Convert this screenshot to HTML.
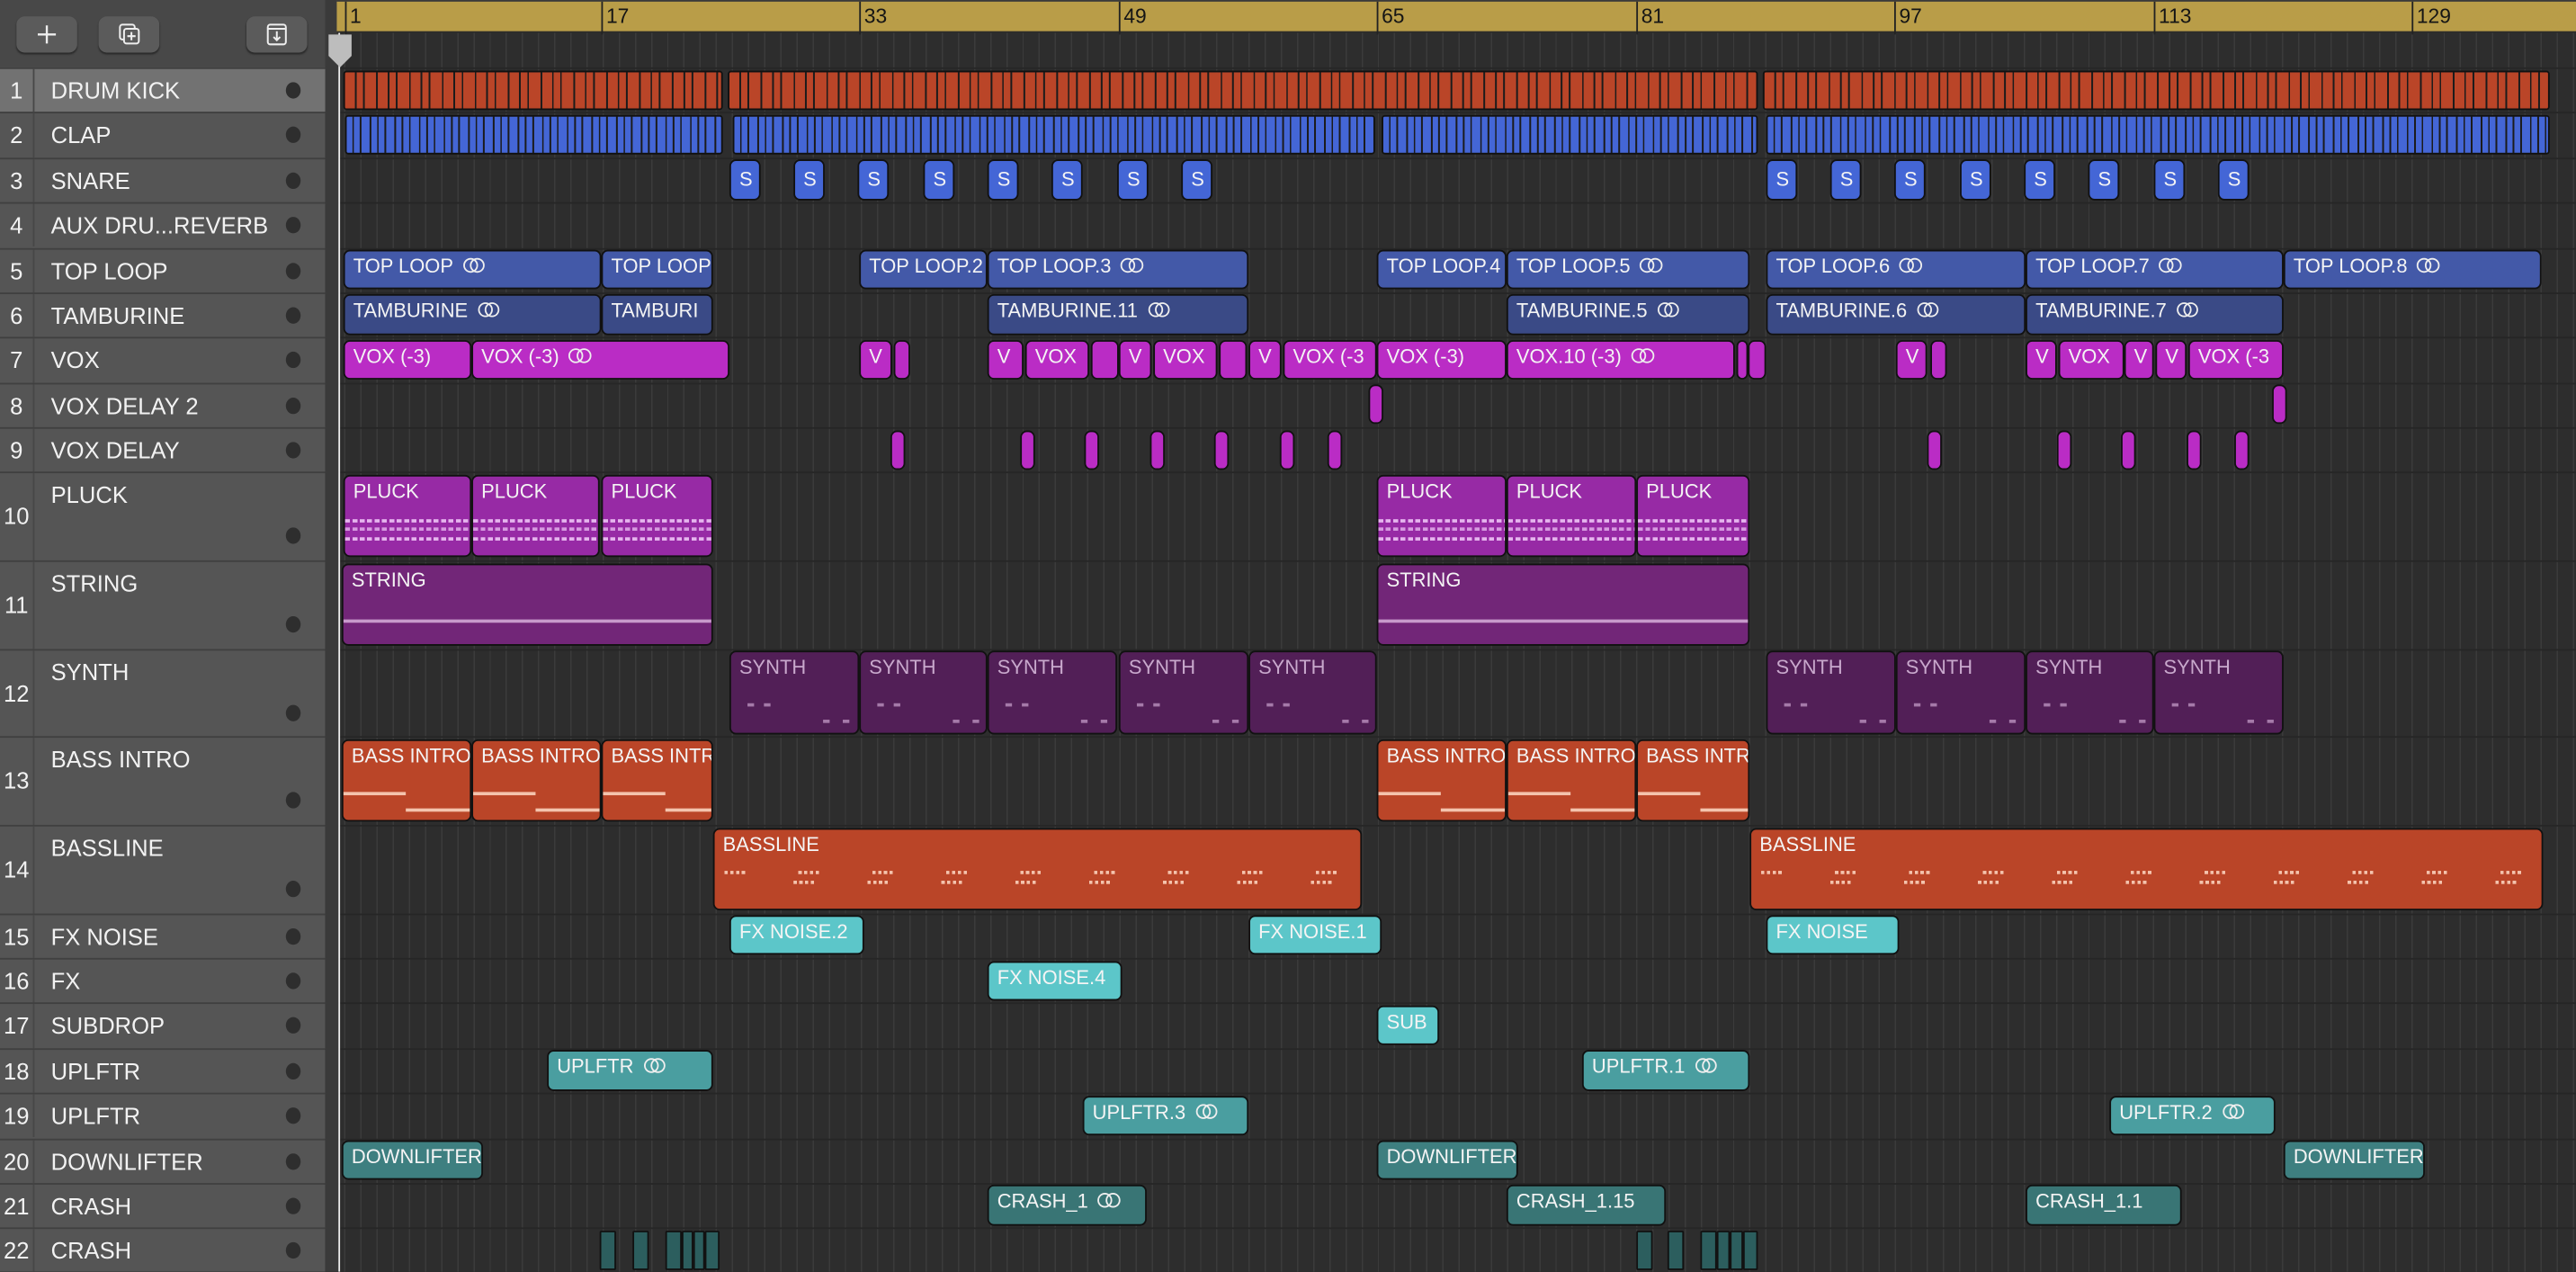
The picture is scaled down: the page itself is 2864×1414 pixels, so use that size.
<!DOCTYPE html>
<html><head><meta charset="utf-8"><style>
html,body{margin:0;padding:0;background:#2d2d2d;overflow:hidden}
#s{position:absolute;left:0;top:0;width:1568px;height:774px;transform:scale(1.82653);transform-origin:0 0;overflow:hidden;font-family:"Liberation Sans",sans-serif}
.lp{position:absolute;left:0;top:0;width:198px;height:774px;background:#555}
.tb{position:absolute;left:0;top:0;width:198px;height:41px;background:#484848}
.bt{position:absolute;top:10px;height:22px;background:#5b5b5b;border-radius:5px;box-shadow:0 1px 1px #2a2a2a}
.tr{position:absolute;left:0;width:198px;border-top:1.5px solid #404040;box-sizing:border-box;color:#f2f2f2;font-size:14px}
.tr .n{position:absolute;left:0;width:21px;text-align:center;border-right:1.5px solid #474747;height:100%;box-sizing:border-box}
.tr .l{position:absolute;left:31px}
.tr .d{position:absolute;left:174px;width:9px;height:10px;border-radius:50%;background:#2e2e2e}
.strip{position:absolute;left:198px;top:0;width:8px;height:774px;background:#3a3a3a}
.ruler{position:absolute;left:205px;top:0;width:1363px;height:20px;background:#b99d48;border-bottom:1px solid #2a2a2a;border-top:1px solid #3a3a3a;box-sizing:border-box}
.bn{position:absolute;top:0;height:20px;border-left:1px solid #222;font-size:12.5px;color:#151515;padding-left:2px;line-height:18px}
.grid{position:absolute;left:206px;top:20px;width:1362px;height:754px;background-color:#2d2d2d;background-image:repeating-linear-gradient(90deg,transparent 0 3.5px,#3b3b3b 3.5px 4.3px,transparent 4.3px 9.83px);}
.hl{position:absolute;left:206px;width:1362px;height:1px;background:#262626}
.ph{position:absolute;left:206px;top:20px;width:1px;height:754px;background:#eee}
.r{position:absolute;border:1.3px solid #111;border-radius:4px;box-sizing:border-box;color:#f4f4f4;font-size:12px;padding:2px 0 0 5px;overflow:hidden;white-space:nowrap;line-height:14px}
.k{background:repeating-linear-gradient(90deg,#ba4528 0 6px,#1b1b1b 6px 7px,#ba4528 7px 11px,#1b1b1b 11px 12px,#ba4528 12px 19px,#1b1b1b 19px 20px);border-radius:2px}
.c{background:repeating-linear-gradient(90deg,#4466d6 0 3.5px,#1b1b1b 3.5px 4.5px,#4466d6 4.5px 8px,#1b1b1b 8px 9px,#4466d6 9px 14px,#1b1b1b 14px 15px);border-radius:2px}
.sn{background:#4466d6;font-size:12px;padding:4px 0 0 5px}
.tl{background:#4359a8}.ta{background:#3a4a86}.vx{background:#ba2cc5}
.pl{background:#972aa5}.st{background:#722678}.sy{background:#521f57;color:#c8a8cc}
.bi{background:#ba4528}.fx{background:#5cc6c9}.up{background:#4a9ea0}.dl{background:#3e7f80}.cr{background:#397575}.c2{background:#2c5e5e;border-radius:1px}
.lo{display:inline-block;position:relative;width:15px;height:10px;margin-left:6px;vertical-align:-1px}
.lo:before,.lo:after{content:"";position:absolute;top:0;width:7px;height:7px;border:1.3px solid #eee;border-radius:50%}
.lo:before{left:0}.lo:after{left:4.5px}
.t1{top:42.5px;height:24.4px}.t2{top:69.9px;height:24.4px}.t3{top:97.2px;height:24.4px}
.t5{top:152px;height:24.4px}.t6{top:179.4px;height:24.4px}.t7{top:206.7px;height:24.4px}
.t8{top:234.1px;height:24.4px}.t9{top:261.5px;height:24.4px}
.t10{top:288.9px;height:50.6px}.t11{top:342.5px;height:50.6px}.t12{top:396.2px;height:50.6px}
.t13{top:449.8px;height:50.6px}.t14{top:503.5px;height:50.6px}
.t15{top:557.1px;height:24.4px}.t16{top:584.5px;height:24.4px}.t17{top:611.9px;height:24.4px}
.t18{top:639.3px;height:24.4px}.t19{top:666.6px;height:24.4px}.t20{top:694px;height:24.4px}
.t21{top:721.4px;height:24.4px}.t22{top:748.7px;height:24.4px}
.pn{position:absolute;left:0;right:0;height:2px;background:repeating-linear-gradient(90deg,#e6b6ee 0 3px,transparent 3px 4.5px)}
.sl{position:absolute;left:0;right:0;top:33px;height:2px;background:#c89acb}
.bl{position:absolute;height:2px;background:#f4c3ad}
.bd{position:absolute;left:6px;right:6px;height:2px;background:repeating-linear-gradient(90deg,#f4c3ad 0 2px,transparent 2px 3.5px,#f4c3ad 3.5px 5.5px,transparent 5.5px 7px,#f4c3ad 7px 9px,transparent 9px 10.5px,#f4c3ad 10.5px 12.5px,transparent 12.5px 45px)}
.sd{position:absolute;width:4px;height:2px;background:#a57aa9}
</style></head><body><div id="s">
<div class="lp"></div>
<div class="tb"></div>
<div class="bt" style="left:10px;width:37px"><svg width="37" height="22"><path d="M18.5 5.5v11M13 11h11" stroke="#eee" stroke-width="1.3"/></svg></div>
<div class="bt" style="left:60px;width:37px"><svg width="37" height="22"><rect x="13" y="5" width="9" height="9" rx="1.5" fill="none" stroke="#eee" stroke-width="1.1"/><rect x="15.5" y="7.5" width="9" height="9" rx="1.5" fill="#5b5b5b" stroke="#eee" stroke-width="1.1"/><path d="M20 9.5v5M17.5 12h5" stroke="#eee" stroke-width="1.1"/></svg></div>
<div class="bt" style="left:150px;width:37px"><svg width="37" height="22"><rect x="13" y="5" width="11" height="12" rx="1.5" fill="none" stroke="#eee" stroke-width="1.1"/><path d="M13 7.5h11M18.5 9v5.5M16.5 12.5l2 2 2-2" stroke="#eee" stroke-width="1.1" fill="none"/></svg></div>

<div class="tr" style="top:41px;height:27.4px;background:#727272"><span class="n" style="line-height:26px">1</span><span class="l" style="line-height:26px">DRUM KICK</span><span class="d" style="top:8px"></span></div>
<div class="tr" style="top:68.4px;height:27.4px"><span class="n" style="line-height:26px">2</span><span class="l" style="line-height:26px">CLAP</span><span class="d" style="top:8px"></span></div>
<div class="tr" style="top:95.8px;height:27.4px"><span class="n" style="line-height:26px">3</span><span class="l" style="line-height:26px">SNARE</span><span class="d" style="top:8px"></span></div>
<div class="tr" style="top:123.1px;height:27.4px"><span class="n" style="line-height:26px">4</span><span class="l" style="line-height:26px">AUX DRU...REVERB</span><span class="d" style="top:8px"></span></div>
<div class="tr" style="top:150.5px;height:27.4px"><span class="n" style="line-height:26px">5</span><span class="l" style="line-height:26px">TOP LOOP</span><span class="d" style="top:8px"></span></div>
<div class="tr" style="top:177.9px;height:27.4px"><span class="n" style="line-height:26px">6</span><span class="l" style="line-height:26px">TAMBURINE</span><span class="d" style="top:8px"></span></div>
<div class="tr" style="top:205.3px;height:27.4px"><span class="n" style="line-height:26px">7</span><span class="l" style="line-height:26px">VOX</span><span class="d" style="top:8px"></span></div>
<div class="tr" style="top:232.6px;height:27.4px"><span class="n" style="line-height:26px">8</span><span class="l" style="line-height:26px">VOX DELAY 2</span><span class="d" style="top:8px"></span></div>
<div class="tr" style="top:260px;height:27.4px"><span class="n" style="line-height:26px">9</span><span class="l" style="line-height:26px">VOX DELAY</span><span class="d" style="top:8px"></span></div>
<div class="tr" style="top:287.4px;height:53.7px"><span class="n" style="line-height:52px">10</span><span class="l" style="top:5px">PLUCK</span><span class="d" style="top:33px"></span></div>
<div class="tr" style="top:341.1px;height:53.7px"><span class="n" style="line-height:52px">11</span><span class="l" style="top:5px">STRING</span><span class="d" style="top:33px"></span></div>
<div class="tr" style="top:394.7px;height:53.7px"><span class="n" style="line-height:52px">12</span><span class="l" style="top:5px">SYNTH</span><span class="d" style="top:33px"></span></div>
<div class="tr" style="top:448.4px;height:53.7px"><span class="n" style="line-height:52px">13</span><span class="l" style="top:5px">BASS INTRO</span><span class="d" style="top:33px"></span></div>
<div class="tr" style="top:502px;height:53.7px"><span class="n" style="line-height:52px">14</span><span class="l" style="top:5px">BASSLINE</span><span class="d" style="top:33px"></span></div>
<div class="tr" style="top:555.7px;height:27.4px"><span class="n" style="line-height:26px">15</span><span class="l" style="line-height:26px">FX NOISE</span><span class="d" style="top:8px"></span></div>
<div class="tr" style="top:583px;height:27.4px"><span class="n" style="line-height:26px">16</span><span class="l" style="line-height:26px">FX</span><span class="d" style="top:8px"></span></div>
<div class="tr" style="top:610.4px;height:27.4px"><span class="n" style="line-height:26px">17</span><span class="l" style="line-height:26px">SUBDROP</span><span class="d" style="top:8px"></span></div>
<div class="tr" style="top:637.8px;height:27.4px"><span class="n" style="line-height:26px">18</span><span class="l" style="line-height:26px">UPLFTR</span><span class="d" style="top:8px"></span></div>
<div class="tr" style="top:665.1px;height:27.4px"><span class="n" style="line-height:26px">19</span><span class="l" style="line-height:26px">UPLFTR</span><span class="d" style="top:8px"></span></div>
<div class="tr" style="top:692.5px;height:27.4px"><span class="n" style="line-height:26px">20</span><span class="l" style="line-height:26px">DOWNLIFTER</span><span class="d" style="top:8px"></span></div>
<div class="tr" style="top:719.9px;height:27.4px"><span class="n" style="line-height:26px">21</span><span class="l" style="line-height:26px">CRASH</span><span class="d" style="top:8px"></span></div>
<div class="tr" style="top:747.3px;height:27.4px"><span class="n" style="line-height:26px">22</span><span class="l" style="line-height:26px">CRASH</span><span class="d" style="top:8px"></span></div>

<div class="strip"></div>
<div class="grid"></div>
<div class="hl" style="top:41px"></div><div class="hl" style="top:68.4px"></div><div class="hl" style="top:95.8px"></div><div class="hl" style="top:123.1px"></div><div class="hl" style="top:150.5px"></div><div class="hl" style="top:177.9px"></div><div class="hl" style="top:205.3px"></div><div class="hl" style="top:232.6px"></div><div class="hl" style="top:260px"></div><div class="hl" style="top:287.4px"></div><div class="hl" style="top:341.1px"></div><div class="hl" style="top:394.7px"></div><div class="hl" style="top:448.4px"></div><div class="hl" style="top:502px"></div><div class="hl" style="top:555.7px"></div><div class="hl" style="top:583px"></div><div class="hl" style="top:610.4px"></div><div class="hl" style="top:637.8px"></div><div class="hl" style="top:665.1px"></div><div class="hl" style="top:692.5px"></div><div class="hl" style="top:719.9px"></div><div class="hl" style="top:747.3px"></div>

<div class="ruler">
<div class="bn" style="left:5px">1</div><div class="bn" style="left:161px">17</div><div class="bn" style="left:318px">33</div><div class="bn" style="left:476px">49</div><div class="bn" style="left:633px">65</div><div class="bn" style="left:791px">81</div><div class="bn" style="left:948px">97</div><div class="bn" style="left:1106px">113</div><div class="bn" style="left:1263px">129</div>
</div>

<div class="r k t1" style="left:209px;width:231px"></div>
<div class="r k t1" style="left:443px;width:627px"></div>
<div class="r k t1" style="left:1073px;width:479px"></div>
<div class="r c t2" style="left:210px;width:230px"></div>
<div class="r c t2" style="left:446px;width:391px"></div>
<div class="r c t2" style="left:841px;width:229px"></div>
<div class="r c t2" style="left:1075px;width:477px"></div>
<div class="r sn t3" style="left:444px;width:19px">S</div><div class="r sn t3" style="left:483px;width:19px">S</div><div class="r sn t3" style="left:522px;width:19px">S</div><div class="r sn t3" style="left:562px;width:19px">S</div><div class="r sn t3" style="left:601px;width:19px">S</div><div class="r sn t3" style="left:640px;width:19px">S</div><div class="r sn t3" style="left:680px;width:19px">S</div><div class="r sn t3" style="left:719px;width:19px">S</div>
<div class="r sn t3" style="left:1075px;width:19px">S</div><div class="r sn t3" style="left:1114px;width:19px">S</div><div class="r sn t3" style="left:1153px;width:19px">S</div><div class="r sn t3" style="left:1193px;width:19px">S</div><div class="r sn t3" style="left:1232px;width:19px">S</div><div class="r sn t3" style="left:1271px;width:19px">S</div><div class="r sn t3" style="left:1311px;width:19px">S</div><div class="r sn t3" style="left:1350px;width:19px">S</div>
<div class="r tl t5" style="left:209px;width:157px">TOP LOOP<span class="lo"></span></div>
<div class="r tl t5" style="left:366px;width:68px">TOP LOOP</div>
<div class="r tl t5" style="left:523px;width:78px">TOP LOOP.2</div>
<div class="r tl t5" style="left:601px;width:159px">TOP LOOP.3<span class="lo"></span></div>
<div class="r tl t5" style="left:838px;width:79px">TOP LOOP.4</div>
<div class="r tl t5" style="left:917px;width:148px">TOP LOOP.5<span class="lo"></span></div>
<div class="r tl t5" style="left:1075px;width:158px">TOP LOOP.6<span class="lo"></span></div>
<div class="r tl t5" style="left:1233px;width:157px">TOP LOOP.7<span class="lo"></span></div>
<div class="r tl t5" style="left:1390px;width:157px">TOP LOOP.8<span class="lo"></span></div>
<div class="r ta t6" style="left:209px;width:157px">TAMBURINE<span class="lo"></span></div>
<div class="r ta t6" style="left:366px;width:68px">TAMBURI</div>
<div class="r ta t6" style="left:601px;width:159px">TAMBURINE.11<span class="lo"></span></div>
<div class="r ta t6" style="left:917px;width:148px">TAMBURINE.5<span class="lo"></span></div>
<div class="r ta t6" style="left:1075px;width:158px">TAMBURINE.6<span class="lo"></span></div>
<div class="r ta t6" style="left:1233px;width:157px">TAMBURINE.7<span class="lo"></span></div>
<div class="r vx t7" style="left:209px;width:78px">VOX (-3)</div>
<div class="r vx t7" style="left:287px;width:157px">VOX (-3)<span class="lo"></span></div>
<div class="r vx t7" style="left:523px;width:20px">V</div><div class="r vx t7" style="left:544px;width:10px"></div>
<div class="r vx t7" style="left:601px;width:22px">V</div><div class="r vx t7" style="left:624px;width:39px">VOX</div><div class="r vx t7" style="left:664px;width:17px"></div>
<div class="r vx t7" style="left:681px;width:20px">V</div><div class="r vx t7" style="left:702px;width:39px">VOX</div><div class="r vx t7" style="left:742px;width:17px"></div>
<div class="r vx t7" style="left:760px;width:20px">V</div><div class="r vx t7" style="left:781px;width:57px">VOX (-3</div>
<div class="r vx t7" style="left:838px;width:79px">VOX (-3)</div>
<div class="r vx t7" style="left:917px;width:139px">VOX.10 (-3)<span class="lo"></span></div>
<div class="r vx t7" style="left:1057px;width:6px"></div><div class="r vx t7" style="left:1064px;width:11px"></div>
<div class="r vx t7" style="left:1154px;width:19px">V</div><div class="r vx t7" style="left:1175px;width:10px"></div>
<div class="r vx t7" style="left:1233px;width:19px">V</div><div class="r vx t7" style="left:1253px;width:40px">VOX</div><div class="r vx t7" style="left:1293px;width:18px">V</div><div class="r vx t7" style="left:1312px;width:19px">V</div><div class="r vx t7" style="left:1332px;width:58px">VOX (-3</div>
<div class="r vx t8" style="left:833px;width:9px"></div><div class="r vx t8" style="left:1383px;width:9px"></div>
<div class="r vx t9" style="left:542px;width:9px"></div><div class="r vx t9" style="left:621px;width:9px"></div><div class="r vx t9" style="left:660px;width:9px"></div><div class="r vx t9" style="left:700px;width:9px"></div><div class="r vx t9" style="left:739px;width:9px"></div><div class="r vx t9" style="left:779px;width:9px"></div><div class="r vx t9" style="left:808px;width:9px"></div>
<div class="r vx t9" style="left:1173px;width:9px"></div><div class="r vx t9" style="left:1252px;width:9px"></div><div class="r vx t9" style="left:1291px;width:9px"></div><div class="r vx t9" style="left:1331px;width:9px"></div><div class="r vx t9" style="left:1360px;width:9px"></div>
<div class="r pl t10" style="left:209px;width:78px">PLUCK<i class="pn" style="top:26px"></i><i class="pn" style="top:31px;opacity:.8"></i><i class="pn" style="top:37px"></i></div>
<div class="r pl t10" style="left:287px;width:78px">PLUCK<i class="pn" style="top:26px"></i><i class="pn" style="top:31px;opacity:.8"></i><i class="pn" style="top:37px"></i></div>
<div class="r pl t10" style="left:366px;width:68px">PLUCK<i class="pn" style="top:26px"></i><i class="pn" style="top:31px;opacity:.8"></i><i class="pn" style="top:37px"></i></div>
<div class="r pl t10" style="left:838px;width:79px">PLUCK<i class="pn" style="top:26px"></i><i class="pn" style="top:31px;opacity:.8"></i><i class="pn" style="top:37px"></i></div>
<div class="r pl t10" style="left:917px;width:79px">PLUCK<i class="pn" style="top:26px"></i><i class="pn" style="top:31px;opacity:.8"></i><i class="pn" style="top:37px"></i></div>
<div class="r pl t10" style="left:996px;width:69px">PLUCK<i class="pn" style="top:26px"></i><i class="pn" style="top:31px;opacity:.8"></i><i class="pn" style="top:37px"></i></div>
<div class="r st t11" style="left:208px;width:226px">STRING<i class="sl"></i></div>
<div class="r st t11" style="left:838px;width:227px">STRING<i class="sl"></i></div>
<div class="r sy t12" style="left:444px;width:79px">SYNTH<i class="sd" style="left:10px;top:31px"></i><i class="sd" style="left:20px;top:31px"></i><i class="sd" style="left:56px;top:41px"></i><i class="sd" style="left:68px;top:41px"></i></div>
<div class="r sy t12" style="left:523px;width:78px">SYNTH<i class="sd" style="left:10px;top:31px"></i><i class="sd" style="left:20px;top:31px"></i><i class="sd" style="left:56px;top:41px"></i><i class="sd" style="left:68px;top:41px"></i></div>
<div class="r sy t12" style="left:601px;width:79px">SYNTH<i class="sd" style="left:10px;top:31px"></i><i class="sd" style="left:20px;top:31px"></i><i class="sd" style="left:56px;top:41px"></i><i class="sd" style="left:68px;top:41px"></i></div>
<div class="r sy t12" style="left:681px;width:79px">SYNTH<i class="sd" style="left:10px;top:31px"></i><i class="sd" style="left:20px;top:31px"></i><i class="sd" style="left:56px;top:41px"></i><i class="sd" style="left:68px;top:41px"></i></div>
<div class="r sy t12" style="left:760px;width:78px">SYNTH<i class="sd" style="left:10px;top:31px"></i><i class="sd" style="left:20px;top:31px"></i><i class="sd" style="left:56px;top:41px"></i><i class="sd" style="left:68px;top:41px"></i></div>
<div class="r sy t12" style="left:1075px;width:79px">SYNTH<i class="sd" style="left:10px;top:31px"></i><i class="sd" style="left:20px;top:31px"></i><i class="sd" style="left:56px;top:41px"></i><i class="sd" style="left:68px;top:41px"></i></div>
<div class="r sy t12" style="left:1154px;width:79px">SYNTH<i class="sd" style="left:10px;top:31px"></i><i class="sd" style="left:20px;top:31px"></i><i class="sd" style="left:56px;top:41px"></i><i class="sd" style="left:68px;top:41px"></i></div>
<div class="r sy t12" style="left:1233px;width:78px">SYNTH<i class="sd" style="left:10px;top:31px"></i><i class="sd" style="left:20px;top:31px"></i><i class="sd" style="left:56px;top:41px"></i><i class="sd" style="left:68px;top:41px"></i></div>
<div class="r sy t12" style="left:1311px;width:79px">SYNTH<i class="sd" style="left:10px;top:31px"></i><i class="sd" style="left:20px;top:31px"></i><i class="sd" style="left:56px;top:41px"></i><i class="sd" style="left:68px;top:41px"></i></div>
<div class="r bi t13" style="left:208px;width:79px">BASS INTRO<i class="bl" style="left:0;width:38px;top:31px"></i><i class="bl" style="left:38px;right:0;top:41px"></i></div>
<div class="r bi t13" style="left:287px;width:79px">BASS INTRO<i class="bl" style="left:0;width:38px;top:31px"></i><i class="bl" style="left:38px;right:0;top:41px"></i></div>
<div class="r bi t13" style="left:366px;width:68px">BASS INTRO<i class="bl" style="left:0;width:38px;top:31px"></i><i class="bl" style="left:38px;right:0;top:41px"></i></div>
<div class="r bi t13" style="left:838px;width:79px">BASS INTRO<i class="bl" style="left:0;width:38px;top:31px"></i><i class="bl" style="left:38px;right:0;top:41px"></i></div>
<div class="r bi t13" style="left:917px;width:79px">BASS INTRO<i class="bl" style="left:0;width:38px;top:31px"></i><i class="bl" style="left:38px;right:0;top:41px"></i></div>
<div class="r bi t13" style="left:996px;width:69px">BASS INTRO<i class="bl" style="left:0;width:38px;top:31px"></i><i class="bl" style="left:38px;right:0;top:41px"></i></div>
<div class="r bi t14" style="left:434px;width:395px">BASSLINE<i class="bd" style="top:25px"></i><i class="bd" style="top:31px;left:48px"></i></div>
<div class="r bi t14" style="left:1065px;width:483px">BASSLINE<i class="bd" style="top:25px"></i><i class="bd" style="top:31px;left:48px"></i></div>
<div class="r fx t15" style="left:444px;width:82px">FX NOISE.2</div>
<div class="r fx t15" style="left:760px;width:81px">FX NOISE.1</div>
<div class="r fx t15" style="left:1075px;width:81px">FX NOISE</div>
<div class="r fx t16" style="left:601px;width:82px">FX NOISE.4</div>
<div class="r fx t17" style="left:838px;width:38px">SUB</div>
<div class="r up t18" style="left:333px;width:101px">UPLFTR<span class="lo"></span></div>
<div class="r up t18" style="left:963px;width:102px">UPLFTR.1<span class="lo"></span></div>
<div class="r up t19" style="left:659px;width:101px">UPLFTR.3<span class="lo"></span></div>
<div class="r up t19" style="left:1284px;width:101px">UPLFTR.2<span class="lo"></span></div>
<div class="r dl t20" style="left:208px;width:86px">DOWNLIFTER</div>
<div class="r dl t20" style="left:838px;width:86px">DOWNLIFTER</div>
<div class="r dl t20" style="left:1390px;width:86px">DOWNLIFTER</div>
<div class="r cr t21" style="left:601px;width:97px">CRASH_1<span class="lo"></span></div>
<div class="r cr t21" style="left:917px;width:97px">CRASH_1.15</div>
<div class="r cr t21" style="left:1233px;width:95px">CRASH_1.1</div>
<div class="r c2 t22" style="left:365px;width:10px"></div><div class="r c2 t22" style="left:385px;width:10px"></div>
<div class="r c2 t22" style="left:405px;width:10px"></div><div class="r c2 t22" style="left:415px;width:7px"></div><div class="r c2 t22" style="left:422px;width:7px"></div><div class="r c2 t22" style="left:429px;width:9px"></div>
<div class="r c2 t22" style="left:996px;width:10px"></div><div class="r c2 t22" style="left:1015px;width:10px"></div>
<div class="r c2 t22" style="left:1035px;width:10px"></div><div class="r c2 t22" style="left:1045px;width:8px"></div><div class="r c2 t22" style="left:1053px;width:8px"></div><div class="r c2 t22" style="left:1061px;width:9px"></div>

<div class="ph"></div>
<svg style="position:absolute;left:199px;top:20px" width="16" height="22"><path d="M1 1h14v13l-7 7-7-7z" fill="#bdbdbd"/></svg>
</div></body></html>
